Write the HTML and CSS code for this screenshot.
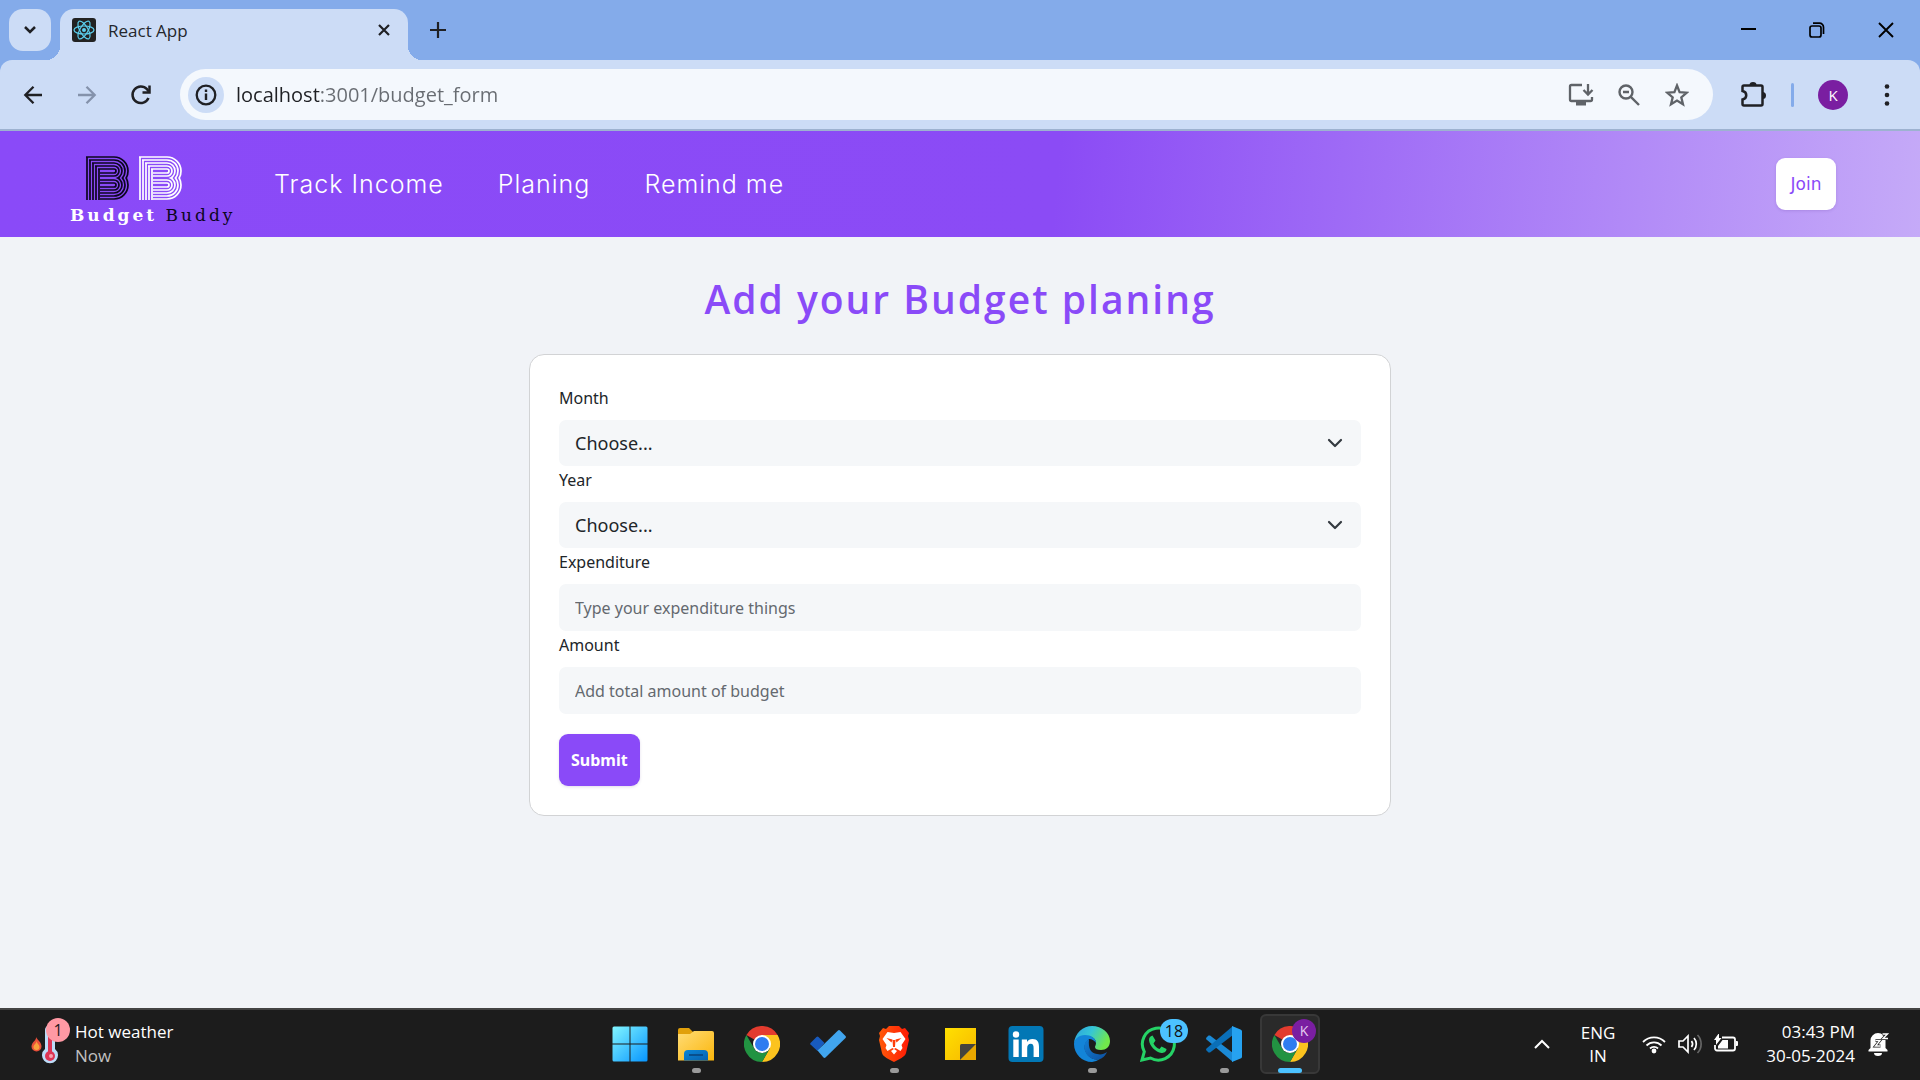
FILE: index.html
```html
<!DOCTYPE html>
<html lang="en">
<head>
<meta charset="utf-8">
<meta name="viewport" content="width=device-width, initial-scale=1">
<title>React App</title>
<link rel="stylesheet" href="styles.css">
</head>
<body>
<svg class="defs" aria-hidden="true">
  <defs>
    <clipPath id="upper"><rect x="0" y="0" width="43" height="22"/></clipPath>
    <clipPath id="lower"><rect x="0" y="22" width="43" height="22"/></clipPath>
    <g id="striped" fill="none" stroke="currentColor" stroke-width="1.700">
      <path d="M1 44V1M4 44V4M7 44V7M10 44V10M13 44V13"/>
      <g clip-path="url(#upper)">
        <path d="M0 1H28A14 14 0 0 1 28 29M3 4H28A11 11 0 0 1 28 26M6 7H28A8 8 0 0 1 28 23M9 10H28A5 5 0 0 1 28 20H14M12 13H28A2 2 0 0 1 28 17H14"/>
      </g>
      <g clip-path="url(#lower)">
        <path d="M28 15A14 14 0 0 1 28 43H14M28 18A11 11 0 0 1 28 40H14M28 21A8 8 0 0 1 28 37H14M14 24H28A5 5 0 0 1 28 34H14M14 27H28A2 2 0 0 1 28 31H14"/>
      </g>
    </g>
    <symbol id="chrome" viewBox="0 0 36 36">
      <path fill="#e33b2e" d="M18 18 2.400 9A18 18 0 0 1 33.600 9H18z"/>
      <path fill="#fcc31e" d="M18 9H33.600A18 18 0 0 1 18 36L26 22z"/>
      <path fill="#229342" d="M2.400 9 10.200 22.500A9 9 0 0 0 25.800 22.500L18 36A18 18 0 0 1 2.400 9z"/>
      <circle cx="18" cy="18" r="9" fill="#fff"/>
      <circle cx="18" cy="18" r="7" fill="#2f7cf0"/>
    </symbol>
    <linearGradient id="win" x1="0" y1="0" x2="1" y2="1"><stop offset="0" stop-color="#82f6ff"/><stop offset="1" stop-color="#0795ff"/></linearGradient>
    <linearGradient id="folder" x1="0" y1="0" x2="1" y2="1"><stop offset="0" stop-color="#ffdc76"/><stop offset="1" stop-color="#fbb60c"/></linearGradient>
    <linearGradient id="tray" x1="0" y1="0" x2="1" y2="1"><stop offset="0" stop-color="#0b86d8"/><stop offset="1" stop-color="#0861ae"/></linearGradient>
    <linearGradient id="brave" x1="0" y1="0" x2="1" y2="0"><stop offset="0" stop-color="#ff5a0a"/><stop offset="1" stop-color="#ff1a05"/></linearGradient>
    <linearGradient id="note" x1="0" y1="0" x2="1" y2="1"><stop offset="0" stop-color="#ffe000"/><stop offset="1" stop-color="#f7b800"/></linearGradient>
    <linearGradient id="edge-top" x1="0" y1="0" x2="1" y2="0.400"><stop offset="0" stop-color="#2b9fe0"/><stop offset="0.500" stop-color="#36c6d5"/><stop offset="1" stop-color="#71e84b"/></linearGradient>
    <linearGradient id="edge-low" x1="0" y1="0" x2="1" y2="1"><stop offset="0" stop-color="#127fd6"/><stop offset="1" stop-color="#0d4f9e"/></linearGradient>
  </defs>
</svg>

<header class="browser">
  <div class="tabstrip">
    <button class="tab-search" aria-label="Search tabs">
      <svg width="14" height="14" viewBox="0 0 14 14"><path d="M2 4l5 5 5-5" fill="none" stroke="#1f2024" stroke-width="2.500"/></svg>
    </button>
    <div class="tab">
      <svg class="favicon" width="24" height="24" viewBox="0 0 24 24">
        <rect width="24" height="24" rx="3" fill="#222"/>
        <g fill="none" stroke="#5ccfee" stroke-width="1.200">
          <ellipse cx="12" cy="12" rx="10" ry="4"/>
          <ellipse cx="12" cy="12" rx="10" ry="4" transform="rotate(60 12 12)"/>
          <ellipse cx="12" cy="12" rx="10" ry="4" transform="rotate(120 12 12)"/>
        </g>
        <circle cx="12" cy="12" r="2" fill="#5ccfee"/>
      </svg>
      <span class="tab-title">React App</span>
      <button class="icon-button small" aria-label="Close tab">
        <svg width="14" height="14" viewBox="0 0 14 14"><path d="M2 2l10 10M12 2L2 12" stroke="#1f2024" stroke-width="2.200"/></svg>
      </button>
    </div>
    <button class="icon-button new-tab" aria-label="New tab">
      <svg width="16" height="16" viewBox="0 0 16 16"><path d="M8 0v16M0 8h16" stroke="#1f2024" stroke-width="2.200"/></svg>
    </button>
    <div class="window-buttons">
      <button aria-label="Minimize"><svg width="16" height="16" viewBox="0 0 16 16"><path d="M1 7h15" stroke="#000" stroke-width="2"/></svg></button>
      <button aria-label="Restore"><svg width="16" height="16" viewBox="0 0 16 16" fill="none" stroke="#000" stroke-width="1.700"><rect x="1" y="4" width="11" height="11" rx="2"/><path d="M4 1.200h6.500a4 4 0 0 1 4 4V12"/></svg></button>
      <button aria-label="Close"><svg width="16" height="16" viewBox="0 0 16 16"><path d="M1 1l14 14M15 1L1 15" stroke="#000" stroke-width="1.900"/></svg></button>
    </div>
  </div>
  <div class="toolbar">
    <div class="nav-buttons">
      <button class="icon-button" aria-label="Back"><svg width="20" height="20" viewBox="0 0 20 20" fill="none" stroke="#1f2024" stroke-width="2.300"><path d="M19 10H3M10.500 1.800L2.300 10l8.200 8.200"/></svg></button>
      <button class="icon-button" aria-label="Forward" disabled><svg width="20" height="20" viewBox="0 0 20 20" fill="none" stroke="#8492ab" stroke-width="2.300"><path d="M1 10h16M9.500 1.800l8.200 8.200-8.200 8.200"/></svg></button>
      <button class="icon-button" aria-label="Reload"><svg width="22" height="22" viewBox="0 0 22 22" fill="none" stroke="#1f2024" stroke-width="2.500"><path d="M18.500 14A8.300 8.300 0 1 1 17 5.200L18.800 7.500"/><path d="M19.500 1.500v7h-7"/></svg></button>
    </div>
    <div class="omnibox">
      <button class="site-info" aria-label="View site information"><svg width="22" height="22" viewBox="0 0 22 22"><circle cx="11" cy="11" r="9.300" fill="none" stroke="#1f2024" stroke-width="2.300"/><path d="M11 9.500V16M11 5.500V8" stroke="#1f2024" stroke-width="2.400"/></svg></button>
      <input class="address" type="text" aria-label="Address" value="localhost:3001/budget_form">
      <div class="omnibox-actions">
        <button class="icon-button" aria-label="Install app"><svg width="26" height="24" viewBox="0 0 26 24" fill="none" stroke="#5f6368" stroke-width="2.300"><path d="M14 2H3.500A1.500 1.500 0 0 0 2 3.500v13A1.500 1.500 0 0 0 3.500 18h19a1.500 1.500 0 0 0 1.500-1.500V14"/><path d="M20 1v10M15.500 7l4.500 4.500L24.500 7"/><path d="M8 20.500h10" stroke-width="4"/></svg></button>
        <button class="icon-button" aria-label="Zoom"><svg width="22" height="22" viewBox="0 0 22 22" fill="none" stroke="#5f6368" stroke-width="2.400"><circle cx="8" cy="8" r="6.500"/><path d="M12.800 12.800l8.200 8.200M5 8h6"/></svg></button>
        <button class="icon-button" aria-label="Bookmark this tab"><svg width="24" height="24" viewBox="0 0 24 24" fill="none" stroke="#5f6368" stroke-width="2.300"><path d="M12 2.500l2.600 6.600 7.200.600-5.500 4.600 1.700 7L12 17.600 6 21.300l1.700-7-5.500-4.600 7.200-.6z"/></svg></button>
      </div>
    </div>
    <div class="toolbar-end">
      <button class="icon-button" aria-label="Extensions"><svg width="26" height="26" viewBox="0 0 26 26"><path d="M4 3.500h17a1.500 1.500 0 0 1 1.500 1.500v17a1.500 1.500 0 0 1-1.500 1.500H4A1.500 1.500 0 0 1 2.500 22v-4.500c5-1 5-7.500 0-8.500V5A1.500 1.500 0 0 1 4 3.500z" fill="none" stroke="#1f2024" stroke-width="2.500"/><path d="M9.500 3a3.500 3 0 0 1 7 0zM22.500 10a3.500 3.500 0 0 1 0 7z" fill="#1f2024"/></svg></button>
      <span class="divider"></span>
      <button class="avatar" aria-label="Profile">K</button>
      <button class="icon-button" aria-label="Menu"><svg width="6" height="22" viewBox="0 0 6 22" fill="#1f2024"><circle cx="3" cy="2.500" r="2.300"/><circle cx="3" cy="11" r="2.300"/><circle cx="3" cy="19.500" r="2.300"/></svg></button>
    </div>
  </div>
</header>

<div class="page">
  <header class="site-header">
    <a class="brand" href="#">
      <svg class="brand-mark" width="97" height="44" viewBox="0 0 97 44" aria-hidden="true">
        <use href="#striped" color="#0c0620"/>
        <use href="#striped" x="53" color="#fff"/>
      </svg>
      <span class="brand-name"><b>Budget</b> <span class="brand-dark">Buddy</span></span>
    </a>
    <nav class="site-nav">
      <a href="#">Track Income</a>
      <a href="#">Planing</a>
      <a href="#">Remind me</a>
    </nav>
    <button class="join">Join</button>
  </header>
  <main class="content">
    <h1 class="title">Add your Budget planing</h1>
    <form class="card">
      <label for="month">Month</label>
      <div class="select-wrap">
        <select id="month"><option>Choose...</option></select>
        <svg width="16" height="10" viewBox="0 0 16 10"><path d="M2 2l6 6 6-6" fill="none" stroke="#343a40" stroke-width="2.200" stroke-linecap="round" stroke-linejoin="round"/></svg>
      </div>
      <label for="year">Year</label>
      <div class="select-wrap">
        <select id="year"><option>Choose...</option></select>
        <svg width="16" height="10" viewBox="0 0 16 10"><path d="M2 2l6 6 6-6" fill="none" stroke="#343a40" stroke-width="2.200" stroke-linecap="round" stroke-linejoin="round"/></svg>
      </div>
      <label for="expenditure">Expenditure</label>
      <input class="field" id="expenditure" type="text" placeholder="Type your expenditure things">
      <label for="amount">Amount</label>
      <input class="field" id="amount" type="text" placeholder="Add total amount of budget">
      <button class="submit" type="submit">Submit</button>
    </form>
  </main>
</div>

<footer class="taskbar">
  <button class="weather">
    <span class="weather-icon">
      <svg width="38" height="44" viewBox="0 0 38 44">
        <path d="M5 15c1 3-4.500 5-4.500 9.500A5 5 0 0 0 10.500 24.500C10.500 20 7 19 5 15z" fill="#e8503a"/>
        <path d="M5.500 19c0 3-3 3.500-3 6a3 3 0 0 0 6 0c0-2.500-2.500-3-3-6z" fill="#f9a03c"/>
        <path d="M14 8a5 5 0 0 1 10 0v19a8 8 0 1 1-10 0z" fill="#bcdcf8"/>
        <path d="M19 12v20" stroke="#dc3454" stroke-width="4"/>
        <circle cx="19" cy="34" r="5" fill="#dc3454"/><circle cx="20" cy="34" r="2" fill="#f7a0b0"/>
      </svg>
      <span class="weather-badge">1</span>
    </span>
    <span class="weather-text"><span>Hot weather</span><span class="muted">Now</span></span>
  </button>
  <div class="apps">
    <button class="app" aria-label="Start"><svg viewBox="0 0 36 36"><path fill="url(#win)" d="M2 .5H17.500V17.500H.5V2A1.500 1.500 0 0 1 2 .5zM18.500.5H34A1.500 1.500 0 0 1 35.500 2V17.500H18.500zM.5 18.500H17.500V35.500H2A1.500 1.500 0 0 1 .5 34zM18.500 18.500H35.500V34A1.500 1.500 0 0 1 34 35.500H18.500z"/></svg></button>
    <button class="app running" aria-label="File Explorer"><svg viewBox="0 0 36 36"><path fill="#e1a00b" d="M0 4a2 2 0 0 1 2-2h9l4 4v6H0z"/><path fill="url(#folder)" d="M0 8h12l4-3h18a2 2 0 0 1 2 2v27.500H0z"/><path fill="url(#tray)" d="M6 34.500V28a4 4 0 0 1 4-4h16a4 4 0 0 1 4 4v6.500z"/><path d="M11 29h14" stroke="#0a4a86" stroke-width="1.800"/></svg></button>
    <button class="app" aria-label="Chrome"><svg><use href="#chrome"/></svg></button>
    <button class="app" aria-label="To Do"><svg viewBox="0 0 36 36"><path d="M.5 17l6-6a1.500 1.500 0 0 1 2 0l6 6-7 8-7-6.500a1.200 1.200 0 0 1 0-1.500z" fill="#185abd"/><path d="M7.500 24.500L28 4.500a1.500 1.500 0 0 1 2 0l5.500 5.500a1.500 1.500 0 0 1 0 2L15.500 31.500a1.500 1.500 0 0 1-2 0z" fill="#41a5ee"/></svg></button>
    <button class="app running" aria-label="Brave"><svg viewBox="0 0 36 36"><path d="M10 3l3-3h10l3 3 3-1 4 5-1 3 1 4-3 13c-1 4-7 6-12 9-5-3-11-5-12-9L3 14l1-4-1-3 4-5z" fill="url(#brave)"/><path d="M11.500 6l6.500 1 6.500-1 5 7-4 6 1 3-2 3-5-3-1.500 1 3 2-3 3.500-3-3.500 3-2-1.500-1-5 3-2-3 1-3-4-6z" fill="#fff"/><path d="M10.500 12l6 1.500-1 3zM25.500 12l-6 1.500 1 3zM16.500 14h3l-.5 7h-2z" fill="#ff3d08"/></svg></button>
    <button class="app" aria-label="Sticky Notes"><svg viewBox="0 0 36 36"><path d="M3 2h31v32H3z" fill="url(#note)"/><path d="M34 18v16H18z" fill="#e9a700"/><path d="M34 18L18 34V19.500A1.500 1.500 0 0 1 19.500 18z" fill="#46433d"/></svg></button>
    <button class="app" aria-label="LinkedIn"><svg viewBox="0 0 36 36"><rect x=".5" width="35" height="36" rx="4" fill="#0277b5"/><g fill="#fff"><circle cx="8" cy="8.500" r="3.200"/><path d="M5.300 13.500h5.400v17.500H5.300zM13.800 13.500H19v2.400c1-1.800 3-2.900 5.500-2.900 5 0 6.500 3 6.500 8v10h-5.400v-9c0-2.500-.500-4.300-2.900-4.300s-3.500 1.700-3.500 4.300v9h-5.400z"/></g></svg></button>
    <button class="app running" aria-label="Edge"><svg viewBox="0 0 36 36"><path d="M0 17C1 7 9 0 18 0c10 0 18 7 18 15 0 6-4 9-9 9-4 0-6-1-6-3 0-1 1-2 1-4 0-4-4-7-9-7C7 10 2 13 0 17z" fill="url(#edge-top)"/><path d="M0 18c0-5 5-9 11-9 6 0 11 3 11 8-1-2-4-4-7-4-4 3-5 7-4 11 2 6 8 11 15 9a18 18 0 0 1-8 3C8 36 0 28 0 18z" fill="#1384d8"/><path d="M15 13c-4 2-6 7-4 12 3 9 13 10 17 7 2-1 4-4 5-6-3 2-6 3-10 2-6-1-9-5-8-15z" fill="url(#edge-low)"/></svg></button>
    <button class="app" aria-label="WhatsApp"><svg viewBox="0 0 36 36"><path d="M2 34l2.300-8.300A16 16 0 1 1 10.500 32z" fill="none" stroke="#25d366" stroke-width="3"/><path d="M12.500 9.500l3 5-2 3c1.500 3 3.500 4.500 6 5.500l2-2.500 5 2.500c0 3-3 4-5 4-6-1-12-7-12.500-13 0-2 1-4 3.500-4.500z" fill="#25d366"/></svg><span class="badge count">18</span></button>
    <button class="app running" aria-label="Visual Studio Code"><svg viewBox="0 0 36 36"><path d="M4 9.500L27 27v9L.5 13.500a1.500 1.500 0 0 1 0-2L2.500 9.500z" fill="#1b8ad6"/><path d="M4 26.500L27 9V0L.5 22.500a1.500 1.500 0 0 0 0 2l2 2z" fill="#0a6fb8"/><path d="M26 0l8.500 3.500A2 2 0 0 1 36 5.500v25a2 2 0 0 1-1.500 2L26 36z" fill="#26a2f0"/></svg></button>
    <button class="app active" aria-label="Chrome, profile K"><svg><use href="#chrome"/></svg><span class="badge profile">K</span></button>
  </div>
  <div class="system">
    <button aria-label="Show hidden icons"><svg width="18" height="12" viewBox="0 0 18 12"><path d="M2 10l7-7 7 7" fill="none" stroke="#fff" stroke-width="2"/></svg></button>
    <button class="language"><span>ENG</span><span>IN</span></button>
    <button class="quick" aria-label="Network, sound, battery">
      <svg width="24" height="20" viewBox="0 0 24 20" fill="none" stroke="#fff" stroke-width="1.800"><path d="M1 8a15.500 15.500 0 0 1 22 0M4.500 11.500a10.600 10.600 0 0 1 15 0M8 14.500a5.700 5.700 0 0 1 8 0"/><circle cx="12" cy="17" r="1.500" fill="#fff"/></svg>
      <svg width="24" height="20" viewBox="0 0 24 20" fill="none" stroke="#fff" stroke-width="1.700"><path d="M1 7h4l5-5v16l-5-5H1z"/><path d="M13.500 7a5 5 0 0 1 0 6M16 4a9 9 0 0 1 0 12"/><path d="M19.500 1a13 13 0 0 1 0 18" stroke="#666"/></svg>
      <svg width="24" height="20" viewBox="0 0 24 20"><path d="M8 3.500h11a2 2 0 0 1 2 2v9a2 2 0 0 1-2 2H3a2 2 0 0 1-2-2V11" fill="none" stroke="#fff" stroke-width="1.800"/><path d="M22 7h1a1 1 0 0 1 1 1v3a1 1 0 0 1-1 1h-1zM8.500 6H14v8.500H4V12zM5 -1v5h2.500L2 11V6H0z" fill="#fff"/></svg>
    </button>
    <button class="clock"><span>03:43 PM</span><span>30-05-2024</span></button>
    <button aria-label="Notifications"><svg width="22" height="24" viewBox="0 0 22 24"><path d="M2.500 8.500a7.500 7.500 0 0 1 15 0v7.500l2 2v1.500H.5V18l2-2zM6 21h8a4 3 0 0 1-8 0z" fill="#fff"/><path d="M7.500 8.500h4.500l-4.500 5.500h5M14.500 2h5l-4.500 4.500h5" fill="none" stroke="#1c1c1c" stroke-width="2.800"/><path d="M7.500 8.500h4.500l-4.500 5.500h5M14.500 2h5l-4.500 4.500h5" fill="none" stroke="#fff" stroke-width="1.400"/></svg></button>
  </div>
</footer>
</body>
</html>
```
FILE: styles.css
```css
*,
*::before,
*::after {
  box-sizing: border-box;
}

body {
  display: flex;
  flex-direction: column;
  min-height: 100vh;
  margin: 0;
  background: #f1f3f7;
  color: #212529;
  font-family: "Open Sans", "Noto Sans", sans-serif;
}

button,
input,
select {
  margin: 0;
  padding: 0;
  border: 0;
  background: none;
  color: inherit;
  font: inherit;
}

button {
  display: flex;
  align-items: center;
  justify-content: center;
}

a {
  color: inherit;
  text-decoration: none;
}

svg {
  display: block;
  flex: none;
}

.defs {
  position: absolute;
  width: 0;
  height: 0;
}

/* Browser window */
.browser {
  background: #84abea;
  border-bottom: 2px solid #9db2d0;
}

.tabstrip {
  display: flex;
  align-items: center;
  height: 60px;
  padding-left: 9px;
}

.tab-search {
  width: 42px;
  height: 42px;
  border-radius: 14px;
  background: #ccdcf6;
}

.tab {
  position: relative;
  display: flex;
  align-items: center;
  align-self: flex-end;
  width: 348px;
  height: 51px;
  margin-left: 9px;
  padding: 0 12px 9px;
  border-radius: 14px 14px 0 0;
  background: #ccdcf6;
}

.tab::before,
.tab::after {
  content: "";
  position: absolute;
  bottom: 0;
  width: 14px;
  height: 14px;
}

.tab::before {
  right: 100%;
  background: radial-gradient(circle at 0 0, transparent 14px, #ccdcf6 14px);
}

.tab::after {
  left: 100%;
  background: radial-gradient(circle at 100% 0, transparent 14px, #ccdcf6 14px);
}

.tab-title {
  flex: 1;
  margin-left: 12px;
  padding-top: 2px;
  color: #24272c;
  font-size: 17px;
  line-height: 24px;
}

.icon-button {
  width: 36px;
  height: 36px;
}

.icon-button.small {
  width: 24px;
  height: 24px;
}

.new-tab {
  margin-left: 12px;
}

.window-buttons {
  display: flex;
  margin-left: auto;
}

.window-buttons button {
  width: 69px;
  height: 60px;
}

.toolbar {
  display: flex;
  align-items: center;
  height: 69px;
  padding: 0 15px;
  border-radius: 12px 12px 0 0;
  background: #ccdcf6;
}

.nav-buttons {
  display: flex;
  gap: 18px;
}

.omnibox {
  display: flex;
  flex: 1;
  align-items: center;
  height: 51px;
  margin-left: 21px;
  padding: 0 18px 0 8px;
  border-radius: 26px;
  background: #f4f8fd;
}

.site-info {
  width: 36px;
  height: 36px;
  border-radius: 50%;
  background: #ccdcf6;
}

.address {
  flex: 1;
  min-width: 0;
  height: 36px;
  margin-left: 12px;
  background: linear-gradient(90deg, #1f2024 84px, #686c72 84px);
  -webkit-background-clip: text;
  background-clip: text;
  color: #686c72;
  -webkit-text-fill-color: transparent;
  font-size: 20px;
}

.omnibox-actions {
  display: flex;
  gap: 12px;
}

.toolbar-end {
  display: flex;
  align-items: center;
  margin-left: 22px;
}

.divider {
  width: 3px;
  height: 24px;
  margin: 0 24px 0 20px;
  border-radius: 2px;
  background: #84abea;
}

.avatar {
  width: 30px;
  height: 30px;
  margin-right: 21px;
  border-radius: 50%;
  background: #7a1ea1;
  color: #fff;
  font-size: 15px;
}

/* Site */
.page {
  flex: 1;
}

.site-header {
  display: flex;
  align-items: center;
  height: 106px;
  padding: 0 84px 0 70px;
  background: linear-gradient(95deg, #8a4af8 0%, #8b4bf5 55%, #c5aaf8 100%);
}

.brand {
  display: flex;
  flex-direction: column;
  width: 204px;
}

.brand-mark {
  margin: 14px 0 3px 16px;
}

.brand-name {
  color: #fff;
  font-family: "DejaVu Serif", serif;
  font-size: 17px;
  line-height: 24px;
  letter-spacing: 3px;
  white-space: nowrap;
}

.brand-dark {
  color: #0c0620;
}

.site-nav {
  display: flex;
  gap: 54px;
  color: #fff;
  font-family: Inter, sans-serif;
  font-size: 25px;
  font-weight: 300;
  letter-spacing: 1px;
}

.join {
  width: 60px;
  height: 52px;
  margin-left: auto;
  border-radius: 9px;
  background: #fff;
  box-shadow: 0 1px 3px rgba(60, 20, 120, 0.15);
  color: #8a4af8;
  font-family: "DejaVu Sans", sans-serif;
  font-size: 17px;
}

.content {
  display: flex;
  flex-direction: column;
  align-items: center;
  padding: 38px 24px;
}

.title {
  margin: 0 0 31px;
  color: #8a4af8;
  font-size: 39px;
  font-weight: 600;
  line-height: 48px;
  letter-spacing: 2px;
}

.card {
  display: flex;
  flex-direction: column;
  width: 100%;
  max-width: 862px;
  padding: 29px;
  border: 1px solid #d2d3d5;
  border-radius: 15px;
  background: #fff;
  font-family: "Noto Sans", sans-serif;
}

.card label {
  margin-bottom: 8px;
  font-size: 16px;
  line-height: 28px;
}

.select-wrap {
  display: grid;
  align-items: center;
}

.select-wrap select,
.select-wrap svg {
  grid-area: 1 / 1;
}

.select-wrap select {
  width: 100%;
  height: 46px;
  padding: 0 48px 0 16px;
  border-radius: 7px;
  background: #f5f7f9;
  font-size: 18px;
  appearance: none;
}

.select-wrap svg {
  justify-self: end;
  margin-right: 18px;
  pointer-events: none;
}

.field {
  height: 47px;
  padding: 0 16px;
  border-radius: 7px;
  background: #f5f7f9;
  font-size: 16px;
}

.field::placeholder {
  color: #64696f;
  opacity: 1;
}

.submit {
  align-self: flex-start;
  height: 52px;
  margin-top: 20px;
  padding: 0 12px;
  border-radius: 9px;
  background: #8a4af8;
  box-shadow: 0 1px 3px rgba(60, 20, 120, 0.15);
  color: #fff;
  font-size: 16px;
  font-weight: 700;
}

/* Taskbar */
.taskbar {
  display: grid;
  grid-template-columns: 1fr auto 1fr;
  align-items: center;
  height: 72px;
  padding-bottom: 2px;
  border-top: 2px solid #444;
  background: #1c1c1c;
  color: #fff;
  font-size: 17px;
  line-height: 24px;
}

.weather {
  justify-self: start;
  gap: 6px;
  margin-left: 31px;
  text-align: left;
}

.weather-icon {
  position: relative;
}

.weather-badge {
  position: absolute;
  top: -4px;
  left: 15px;
  width: 24px;
  height: 24px;
  border-radius: 12px;
  background: #ff99a4;
  color: #1c1c1c;
  font-size: 16px;
  text-align: center;
}

.weather-text {
  display: flex;
  flex-direction: column;
}

.muted {
  color: #c0c0c0;
}

.apps {
  display: flex;
  gap: 6px;
}

.app {
  position: relative;
  width: 60px;
  height: 60px;
  border: 2px solid transparent;
  border-radius: 6px;
}

.app svg {
  width: 36px;
  height: 36px;
}

.app.active {
  border-color: #383838;
  background: #2a2a2a;
}

.app.running::after,
.app.active::after {
  content: "";
  position: absolute;
  bottom: -1px;
  width: 9px;
  height: 5px;
  border-radius: 3px;
  background: #9a9a9a;
}

.app.active::after {
  width: 24px;
  background: #4cc2ff;
}

.badge {
  position: absolute;
  top: 3px;
  right: 2px;
  height: 24px;
  border-radius: 12px;
  font-size: 16px;
  text-align: center;
}

.badge.count {
  right: -2px;
  width: 28px;
  background: #4cc2ff;
  color: #101010;
}

.badge.profile {
  width: 24px;
  background: #7a1ea1;
  color: #e6cdf0;
  font-size: 14px;
}

.system {
  display: flex;
  align-items: center;
  justify-self: end;
  padding-right: 30px;
}

.language,
.clock {
  flex-direction: column;
}

.language {
  margin: 0 27px 0 30px;
  line-height: 23px;
}

.quick {
  gap: 12px;
}

.clock {
  align-items: flex-end;
  margin: 0 13px 0 28px;
}
```
